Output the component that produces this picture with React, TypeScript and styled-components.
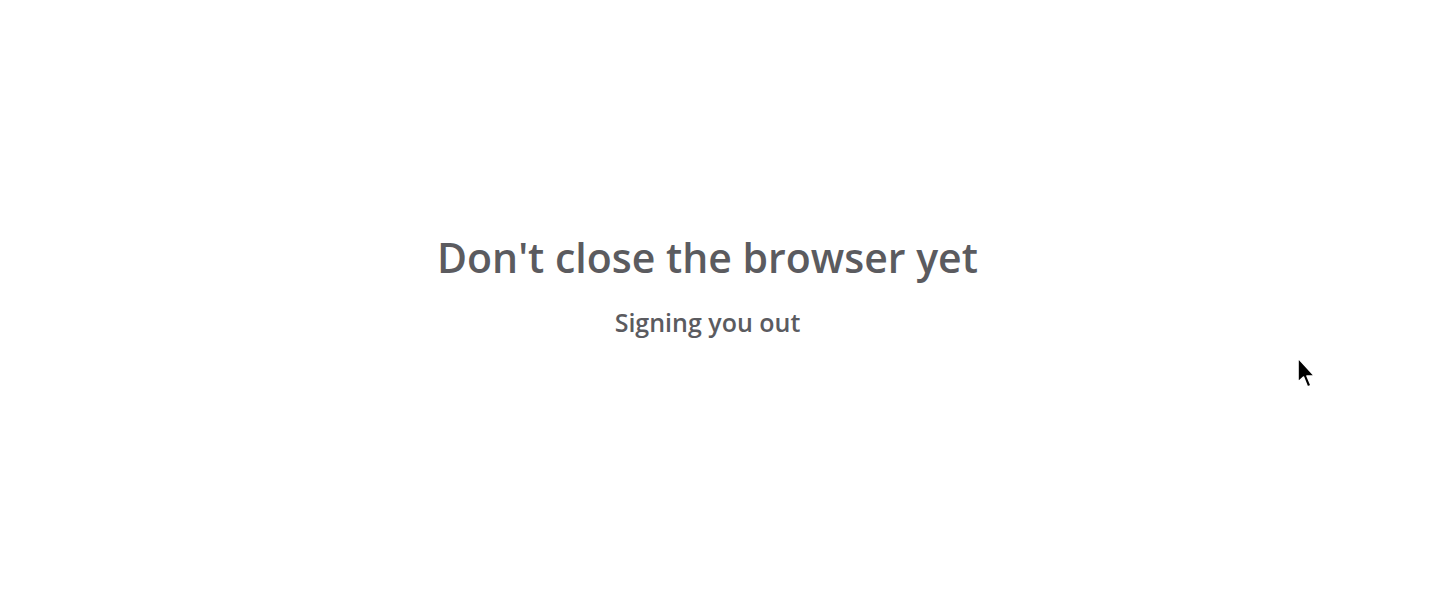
import styled, { createGlobalStyle } from 'styled-components';

const GlobalStyle = createGlobalStyle`
  html, body {
    margin: 0;
    padding: 0;
    background: #ffffff;
  }
  body {
    font-family: "Open Sans", Lato, Arial, sans-serif;
    -webkit-font-smoothing: antialiased;
  }
`;

const Page = styled.main`
  position: relative;
  height: 602px;
  overflow: hidden;
  display: flex;
  flex-direction: column;
  align-items: center;
  padding: 232px 25px 0 0;
  box-sizing: border-box;
`;

const Title = styled.h1`
  margin: 0;
  font-size: 41px;
  line-height: 50px;
  font-weight: 600;
  color: #5b5b5f;
`;

const Subtitle = styled.p`
  margin: 24px 0 0;
  font-size: 25px;
  line-height: 32px;
  font-weight: 600;
  color: #5b5b5f;
`;

const Cursor = styled.svg`
  position: absolute;
  left: 1296px;
  top: 357px;
  width: 22px;
  height: 34px;
`;

export default function App() {
  return (
    <>
      <GlobalStyle />
      <Page>
        <Title>Don't close the browser yet</Title>
        <Subtitle>Signing you out</Subtitle>
        <Cursor viewBox="0 0 22 34">
          <path
            d="M2 1 L2 25 L7.5 20 L11.5 30 L15 28.5 L11 19 L18.5 19 Z"
            fill="#000"
            stroke="#fff"
            strokeWidth="1.6"
            strokeLinejoin="round"
          />
        </Cursor>
      </Page>
    </>
  );
}
